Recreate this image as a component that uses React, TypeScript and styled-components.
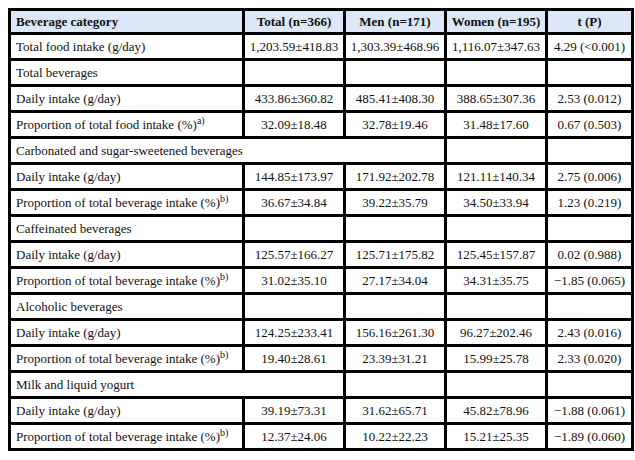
import React from "react";
import styled, { createGlobalStyle } from "styled-components";

const Global = createGlobalStyle`
  html, body { margin: 0; padding: 0; background: #fff; }
  body { padding: 8px; font-family: "Liberation Serif", "Times New Roman", serif; }
`;

const Table = styled.table`
  border-collapse: collapse;
  table-layout: fixed;
  width: 623px;
  border: 3px solid #000;
  font-family: "Liberation Serif", "Times New Roman", serif;
  font-size: 13px;
  color: #111;
`;

const Col = styled.col<{ $w: number }>`
  width: ${(p) => p.$w}px;
`;

const HeadRow = styled.tr`
  height: 24px;
`;

const BodyRow = styled.tr`
  height: 26px;
`;

const Th = styled.th<{ $left?: boolean }>`
  background: #dce8f8;
  font-weight: bold;
  text-align: ${(p) => (p.$left ? "left" : "center")};
  padding: 0 2px 0 ${(p) => (p.$left ? 5 : 2)}px;
  line-height: 15px;
  border-left: 3px solid #000;
  border-right: 3px solid #000;
  border-top: 3px solid #000;
  border-bottom: 1px solid #7d8ea5;
  white-space: nowrap;
`;

const Td = styled.td<{ $left?: boolean }>`
  text-align: ${(p) => (p.$left ? "left" : "center")};
  padding: 0 2px 0 ${(p) => (p.$left ? 5 : 2)}px;
  line-height: 15px;
  border: 3px solid #000;
  white-space: nowrap;
  vertical-align: middle;
`;

const Sup = styled.sup`
  font-size: 10px;
  line-height: 0;
  vertical-align: 5px;
`;

type DataRow = { kind: "data"; label: string; sup?: string; vals: string[] };
type CatRow = { kind: "cat"; label: string; span: number };
type Row = DataRow | CatRow;

const rows: Row[] = [
  { kind: "data", label: "Total food intake (g/day)", vals: ["1,203.59±418.83", "1,303.39±468.96", "1,116.07±347.63", "4.29 (<0.001)"] },
  { kind: "cat", label: "Total beverages", span: 1 },
  { kind: "data", label: "Daily intake (g/day)", vals: ["433.86±360.82", "485.41±408.30", "388.65±307.36", "2.53 (0.012)"] },
  { kind: "data", label: "Proportion of total food intake (%)", sup: "a)", vals: ["32.09±18.48", "32.78±19.46", "31.48±17.60", "0.67 (0.503)"] },
  { kind: "cat", label: "Carbonated and sugar-sweetened beverages", span: 3 },
  { kind: "data", label: "Daily intake (g/day)", vals: ["144.85±173.97", "171.92±202.78", "121.11±140.34", "2.75 (0.006)"] },
  { kind: "data", label: "Proportion of total beverage intake (%)", sup: "b)", vals: ["36.67±34.84", "39.22±35.79", "34.50±33.94", "1.23 (0.219)"] },
  { kind: "cat", label: "Caffeinated beverages", span: 1 },
  { kind: "data", label: "Daily intake (g/day)", vals: ["125.57±166.27", "125.71±175.82", "125.45±157.87", "0.02 (0.988)"] },
  { kind: "data", label: "Proportion of total beverage intake (%)", sup: "b)", vals: ["31.02±35.10", "27.17±34.04", "34.31±35.75", "−1.85 (0.065)"] },
  { kind: "cat", label: "Alcoholic beverages", span: 1 },
  { kind: "data", label: "Daily intake (g/day)", vals: ["124.25±233.41", "156.16±261.30", "96.27±202.46", "2.43 (0.016)"] },
  { kind: "data", label: "Proportion of total beverage intake (%)", sup: "b)", vals: ["19.40±28.61", "23.39±31.21", "15.99±25.78", "2.33 (0.020)"] },
  { kind: "cat", label: "Milk and liquid yogurt", span: 2 },
  { kind: "data", label: "Daily intake (g/day)", vals: ["39.19±73.31", "31.62±65.71", "45.82±78.96", "−1.88 (0.061)"] },
  { kind: "data", label: "Proportion of total beverage intake (%)", sup: "b)", vals: ["12.37±24.06", "10.22±22.23", "15.21±25.35", "−1.89 (0.060)"] },
];

export default function App() {
  return (
    <>
      <Global />
      <Table>
        <colgroup>
          <Col $w={234} />
          <Col $w={101} />
          <Col $w={101} />
          <Col $w={101} />
          <Col $w={86} />
        </colgroup>
        <thead>
          <HeadRow>
            <Th $left>Beverage category</Th>
            <Th>Total (n=366)</Th>
            <Th>Men (n=171)</Th>
            <Th>Women (n=195)</Th>
            <Th>t (P)</Th>
          </HeadRow>
        </thead>
        <tbody>
          {rows.map((r, i) =>
            r.kind === "cat" ? (
              <BodyRow key={i}>
                <Td $left colSpan={r.span}>{r.label}</Td>
                {Array.from({ length: 5 - r.span }).map((_, j) => (
                  <Td key={j} />
                ))}
              </BodyRow>
            ) : (
              <BodyRow key={i}>
                <Td $left>
                  {r.label}
                  {r.sup && <Sup>{r.sup}</Sup>}
                </Td>
                {r.vals.map((v, j) => (
                  <Td key={j}>{v}</Td>
                ))}
              </BodyRow>
            )
          )}
        </tbody>
      </Table>
    </>
  );
}
